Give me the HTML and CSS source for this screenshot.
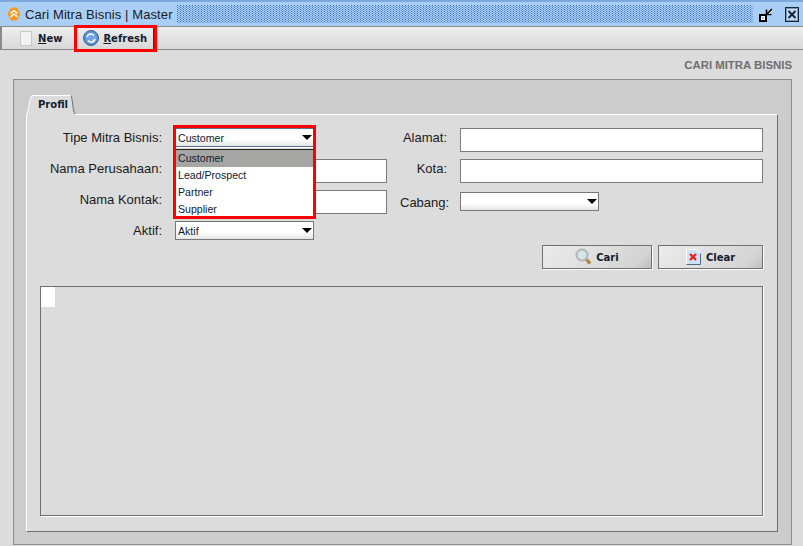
FILE: index.html
```html
<!DOCTYPE html>
<html lang="id">
<head>
<meta charset="utf-8">
<title>Cari Mitra Bisnis | Master</title>
<link rel="stylesheet" href="styles.css">
</head>
<body>
<div class="window">
  <header class="titlebar">
    <svg class="app-icon" width="14" height="14" viewBox="0 0 14 14"><path d="M4 .5h6L13.500 7 10 13.500H4L.5 7z" fill="#f39a1e"/><path d="M3.500 6.500 7 3.500l3.500 3M3.500 10 7 7l3.500 3" fill="none" stroke="#fff" stroke-width="1.600"/></svg>
    <span class="title">Cari Mitra Bisnis | Master</span>
    <svg class="dither" height="18"><defs><pattern id="dots" width="3" height="2" patternUnits="userSpaceOnUse"><rect width="3" height="2" fill="#aacff7"/><rect width="1" height="1" fill="#3f74bd"/><rect x="1.500" y="1" width="1" height="1" fill="#4f84cc"/></pattern></defs><rect width="100%" height="100%" fill="url(#dots)"/></svg>
    <svg class="win-btn restore" width="14" height="15" viewBox="0 0 14 15"><rect x="1" y="8" width="6" height="6" fill="#fff" stroke="#000" stroke-width="2"/><rect x="3" y="10" width="2" height="2" fill="#aacff7"/><path d="M13 2 8 7M7.500 2.500v5h5" fill="none" stroke="#000" stroke-width="1.600"/><path d="M14 3l-4 4" stroke="#fff"/></svg>
    <svg class="win-btn close" width="14" height="15" viewBox="0 0 14 15"><rect x=".5" y=".5" width="13" height="14" fill="#c5d8ee" stroke="#10263e"/><rect x="1.500" y="1.500" width="11" height="12" fill="none" stroke="#7f9ab8"/><path d="M3.500 4l7 7m0-7-7 7" stroke="#10263e" stroke-width="2"/></svg>
  </header>
  <nav class="toolbar">
    <button class="tool tool-new"><span class="page-icon"></span><span><u>N</u>ew</span></button>
    <button class="tool tool-refresh">
      <svg width="16" height="16" viewBox="0 0 16 16"><circle cx="8" cy="8" r="7.500" fill="#5b8fd0" stroke="#3c659c"/><circle cx="8" cy="8" r="5.500" fill="#6fa6e2"/><path d="M4 7a4 4 0 0 1 7-1.500M12 9a4 4 0 0 1-7 1.500" fill="none" stroke="#fff" stroke-width="1.500"/></svg>
      <span><u>R</u>efresh</span>
      <span class="mark mark-tool"></span>
    </button>
  </nav>
  <main class="content">
    <div class="heading">CARI MITRA BISNIS</div>
    <section class="outer">
      <div class="tabs">
        <svg class="tab-shape" width="50" height="20" viewBox="0 0 50 20"><path d="M.5 20C3 16 3 3 6.500.5H45c1.500 2 1.500 15 4 19.500z" fill="#dcdcdc"/><path d="M.5 20C3 16 3 3 6.500.5H45" fill="none" stroke="#fff"/><path d="M45 .5c1.500 2 1.500 15 4 18.500" fill="none" stroke="#6f6f6f"/></svg>
        <div class="tab">Profil</div>
      </div>
      <div class="tab-panel">
        <div class="form">
          <label class="lbl">Tipe Mitra Bisnis:</label>
          <div class="combo-wrap">
            <div class="combo combo-focus"><span>Customer</span><i class="arrow"></i></div>
            <ul class="popup">
              <li class="selected">Customer</li>
              <li>Lead/Prospect</li>
              <li>Partner</li>
              <li>Supplier</li>
            </ul>
            <span class="mark mark-combo"></span>
          </div>
          <label class="lbl">Alamat:</label>
          <div class="input"></div>

          <label class="lbl">Nama Perusahaan:</label>
          <div class="input"></div>
          <label class="lbl">Kota:</label>
          <div class="input"></div>

          <label class="lbl">Nama Kontak:</label>
          <div class="input"></div>
          <label class="lbl lbl-low">Cabang:</label>
          <div class="combo combo-low"><span></span><i class="arrow"></i></div>

          <label class="lbl">Aktif:</label>
          <div class="combo"><span>Aktif</span><i class="arrow"></i></div>
        </div>
        <div class="actions">
          <button class="act act-cari">
            <svg width="17" height="18" viewBox="0 0 17 18"><circle cx="7" cy="7" r="5.500" fill="#d5e3ea" stroke="#b0b5b5" stroke-width="2"/><path d="M11.500 11.500l3.500 4" stroke="#b5833a" stroke-width="3.400"/></svg>
            <span>Cari</span>
          </button>
          <button class="act act-clear">
            <svg width="15" height="16" viewBox="0 0 15 16"><path d="M.5.5h10l4 4v11H.5z" fill="#cfe2f5" stroke="#fff"/><path d="M14.500 4.500v11H.5" fill="none" stroke="#4d6a8a"/><path d="M4 5l6 6m0-6-6 6" stroke="#e8241f" stroke-width="2.400"/></svg>
            <span>Clear</span>
          </button>
        </div>
        <div class="grid-area"><div class="corner"></div></div>
      </div>
    </section>
  </main>
</div>
</body>
</html>
```
FILE: styles.css
```css
* { box-sizing: border-box; }
html, body { margin: 0; padding: 0; }
body { width: 803px; height: 546px; overflow: hidden; background: #dcdcdc; font-family: "Liberation Sans", Arial, sans-serif; color: #111; }
.window { display: flex; flex-direction: column; height: 546px; }

.titlebar { height: 26px; flex: none; display: flex; align-items: center; background: #aacff7; border-top: 2px solid #7ea9dc; padding: 0 4px 0 7px; }
.app-icon { flex: none; }
.title { margin-left: 4px; font-size: 13px; letter-spacing: .1px; color: #1a1a1a; white-space: nowrap; width: 152px; }
.dither { flex: 1; min-width: 0; height: 18px; margin-right: 6px; }
.win-btn { flex: none; }
.restore { margin-right: 12px; }

.toolbar { height: 24px; flex: none; display: flex; align-items: center; gap: 16px; padding-left: 18px; border: 1px solid #8a8a8a; border-width: 1px 0 1px 2px; background: linear-gradient(#eeeeee, #d8d8d8); }
.tool { display: flex; align-items: center; gap: 6px; padding: 0; border: 0; background: none; font: bold 10px "DejaVu Sans", sans-serif; color: #10202e; position: relative; height: 22px; }
.page-icon { width: 12px; height: 15px; background: #f2f2f2; border: 1px solid #c9c9c9; }
.tool-refresh { padding: 0 6px 0 5px; gap: 4px; border-right: 1px solid #333; }
.mark { position: absolute; border: 3px solid #ff0000; pointer-events: none; }
.mark-tool { inset: -2px -4px -3px -4px; }

.content { flex: 1; display: flex; flex-direction: column; padding: 0 11px 1px 13px; min-height: 0; }
.heading { height: 29px; padding-top: 9px; text-align: right; font-size: 11.400px; font-weight: bold; color: #6f6f6f; }
.outer { flex: 1; display: flex; flex-direction: column; background: #cccccc; border: 1px solid #8e8e8e; padding: 15px 13px 12px 12px; min-height: 0; }
.tabs { height: 20px; flex: none; position: relative; margin-bottom: -1px; z-index: 1; }
.tab-shape { position: absolute; left: 0; top: 0; }
.tab { position: relative; padding: 4px 0 0 12px; font: bold 10px "DejaVu Sans", sans-serif; color: #10202e; }
.tab-panel { flex: 1; display: flex; flex-direction: column; background: #dcdcdc; border: solid #6f6f6f; border-width: 0 1px 1px 0; border-top: 1px solid #fff; border-left: 1px solid #fff; padding: 13px 14px 15px 13px; min-height: 0; }

.form { display: grid; grid-template-columns: 122px 212px 47px 303px; grid-template-rows: repeat(4, 24px); gap: 7px 13px; flex: none; }
.lbl { font-size: 13px; line-height: 19px; text-align: right; white-space: nowrap; color: #1a1a1a; }
.lbl-low { margin-top: 3px; }
.input { height: 24px; background: #fff; border: 1px solid #7b7b7b; }
.combo { width: 139px; height: 19px; background: linear-gradient(#fff 60%, #e4e4e4); border: 1px solid #777; display: flex; align-items: center; justify-content: space-between; padding: 0 1px 0 2px; font-size: 10.600px; color: #10202e; }
.combo-focus { border-color: #59728f; outline: 1px solid #fff; }
.combo-low { margin-top: 2px; }
.arrow { width: 0; height: 0; border: 5px solid transparent; border-top: 5px solid #000; border-bottom: 0; }
.combo-wrap { position: relative; }
.popup { position: absolute; left: 0; top: 21px; width: 139px; margin: 0; padding: 0; list-style: none; background: #fff; border: 1px solid #222; border-width: 1px 0 0 1px; font-size: 10.600px; color: #10202e; z-index: 2; }
.popup li { height: 17px; line-height: 17px; padding-left: 2px; }
.popup .selected { background: #a5a5a3; }
.mark-combo { left: -2px; top: -3px; width: 143px; height: 94px; z-index: 3; }

.actions { display: flex; justify-content: flex-end; gap: 6px; height: 24px; flex: none; }
.act { display: flex; align-items: center; justify-content: center; gap: 4px; height: 24px; padding: 0; background: linear-gradient(135deg, #ececec, #d4d4d4 85%, #c0c0c0); border: 1px solid #6f6f6f; box-shadow: 1px 1px 0 #fff; font: bold 10px "DejaVu Sans", sans-serif; color: #10202e; }
.act-cari { width: 110px; }
.act-clear { width: 105px; gap: 5px; }

.grid-area { flex: 1; margin-top: 17px; background: #dcdcdc; border: 1px solid #6f6f6f; box-shadow: 1px 1px 0 #fff; min-height: 0; }
.corner { width: 14px; height: 20px; background: #fff; }
```
